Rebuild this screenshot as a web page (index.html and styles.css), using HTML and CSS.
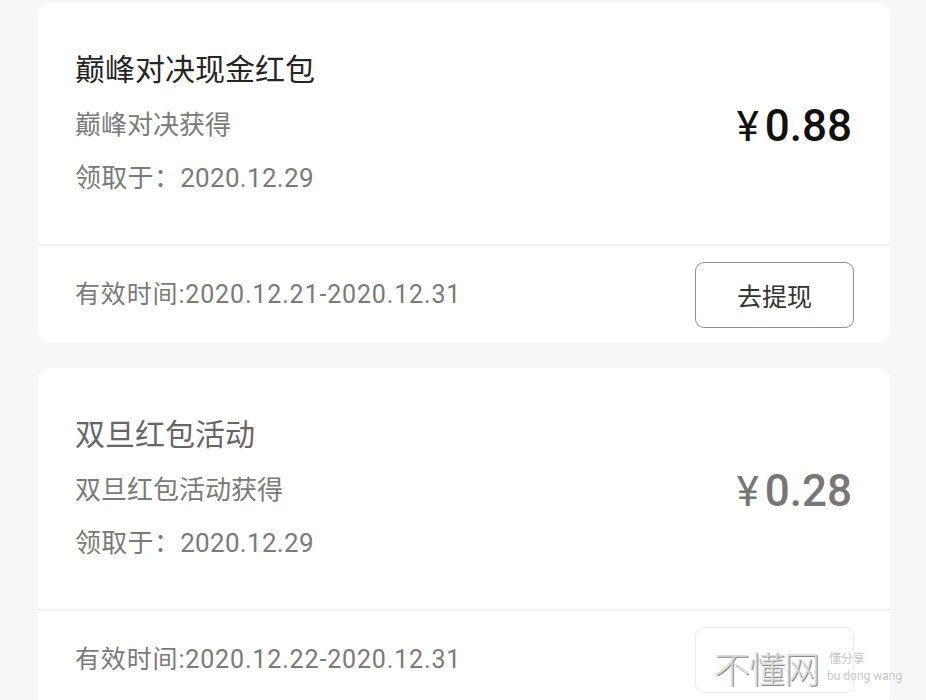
FILE: index.html
```html
<!DOCTYPE html>
<html lang="zh-CN">
<head>
    <meta charset="UTF-8">
    <meta name="viewport" content="width=device-width, initial-scale=1.0">
    <title>红包记录</title>
    <link rel="stylesheet" href="styles.css">
</head>
<body>
    <div class="list">
        <div class="card">
            <div class="card-top">
                <div class="info">
                    <h1 class="title">巅峰对决现金红包</h1>
                    <p class="sub">巅峰对决获得</p>
                    <p class="sub date">领取于：2020.12.29</p>
                </div>
                <div class="price"><span class="yen">¥</span>0.88</div>
            </div>
            <div class="card-bottom">
                <span class="valid">有效时间:2020.12.21-2020.12.31</span>
                <button class="btn">去提现</button>
            </div>
        </div>

        <div class="card used">
            <div class="card-top">
                <div class="info">
                    <h1 class="title">双旦红包活动</h1>
                    <p class="sub">双旦红包活动获得</p>
                    <p class="sub date">领取于：2020.12.29</p>
                </div>
                <div class="price"><span class="yen">¥</span>0.28</div>
            </div>
            <div class="card-bottom">
                <span class="valid">有效时间:2020.12.22-2020.12.31</span>
                <button class="btn"></button>
            </div>
        </div>
    </div>

    <div class="watermark">
        <span class="wm-big">不懂网</span>
        <span class="wm-small">
            <span>懂分享</span>
            <span>bu dong wang</span>
        </span>
    </div>
</body>
</html>
```

FILE: styles.css
```css
body {
    margin: 0;
    padding: 0;
    background-color: #f7f7f7;
    font-family: Roboto, "Noto Sans CJK SC", sans-serif;
    height: 700px;
    overflow: hidden;
    position: relative;
}
.list {
    padding: 3px 36px 0 38px;
}
.card {
    background-color: #fff;
    border-radius: 12px;
    height: 340px;
    margin-bottom: 25px;
    display: flex;
    flex-direction: column;
}
.card-top {
    height: 241px;
    display: flex;
    justify-content: space-between;
    align-items: center;
    padding: 0 38px 0 37px;
    border-bottom: 2px solid #f2f2f2;
}
.info {
    padding-top: 1px;
}
.title {
    margin: 0;
    font-size: 30px;
    font-weight: normal;
    line-height: 40px;
    color: #252525;
}
.sub {
    margin: 15px 0 0;
    font-size: 26px;
    line-height: 40px;
    color: #7a7a7a;
}
.sub.date {
    margin-top: 13px;
    letter-spacing: 0.3px;
}
.price {
    font-size: 44px;
    font-weight: 500;
    color: #111;
    margin-top: 4px;
}
.yen {
    font-size: 42px;
    font-weight: 400;
    margin-right: 6px;
}
.card-bottom {
    flex: 1;
    display: flex;
    justify-content: space-between;
    align-items: center;
    padding: 0 36px 0 37px;
}
.valid {
    font-size: 25px;
    letter-spacing: 0.85px;
    color: #7a7a7a;
    padding-bottom: 6px;
}
.btn {
    width: 159px;
    height: 66px;
    background: #fff;
    border: 1px solid #8f8f8f;
    border-radius: 9px;
    font-family: "Noto Sans CJK SC", sans-serif;
    font-size: 25px;
    color: #333;
    cursor: pointer;
}
.used .title {
    color: #666;
}
.used .price {
    color: #777;
}
.used .btn {
    border-color: #ececec;
}
.watermark {
    position: absolute;
    left: 714px;
    top: 641px;
    display: flex;
    align-items: center;
    gap: 8px;
    color: #dadada;
    text-shadow: 1px 1px 0 #8a8a8a;
}
.wm-big {
    font-family: "Noto Sans CJK SC", sans-serif;
    font-size: 36px;
    font-weight: 300;
    letter-spacing: -1px;
}
.wm-small {
    display: flex;
    flex-direction: column;
    font-size: 12px;
    line-height: 18px;
    color: #c8c8c8;
    text-shadow: none;
}
.wm-small span:first-child {
    font-family: "Noto Sans CJK SC", sans-serif;
    padding-left: 2px;
}
```
